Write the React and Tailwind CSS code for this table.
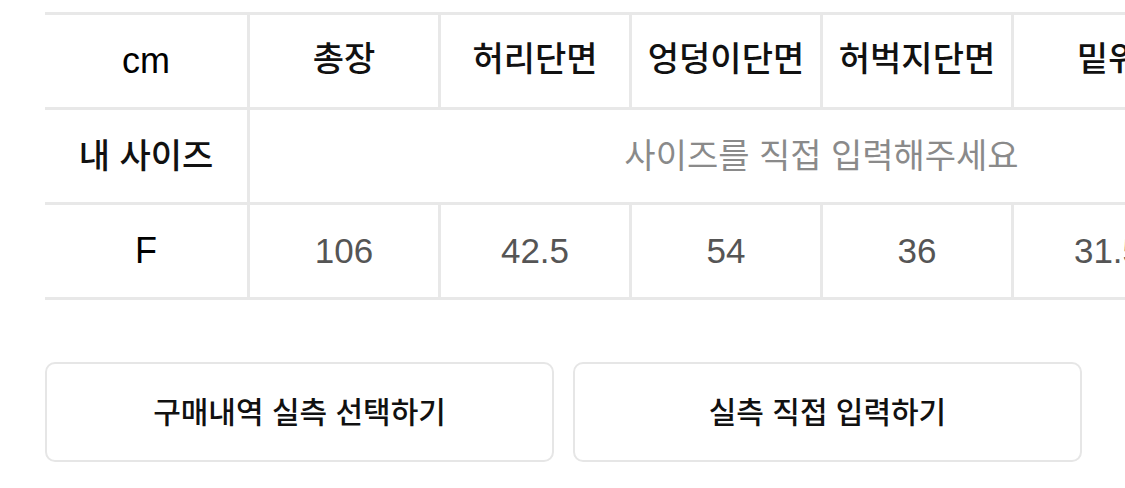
import React from 'react';

const font = { fontFamily: '"Liberation Sans", "Noto Sans CJK KR", sans-serif' };

const headers = ['총장', '허리단면', '엉덩이단면', '허벅지단면', '밑위'];
const values = ['106', '42.5', '54', '36', '31.5', '—'];

export default function App() {
    return (
        <div className="w-[1125px] h-[488px] overflow-hidden bg-white" style={font}>
            <div className="pl-[45px] pt-[12px]">
                <div className="grid grid-cols-[202px_repeat(6,191px)] w-max border-t-[3px] border-[#e8e8e8]">
                    {/* header row */}
                    <div className="h-[95px] flex items-center justify-center border-b-[3px] border-[#e8e8e8] text-[36px] text-black">cm</div>
                    {headers.map((h) => (
                        <div key={h} className="h-[95px] flex items-center justify-center border-b-[3px] border-l-[3px] border-[#e8e8e8] text-[34px] font-medium text-[#111] pb-[4px]">
                            {h}
                        </div>
                    ))}
                    <div className="h-[95px] flex items-center justify-center border-b-[3px] border-l-[3px] border-[#e8e8e8] text-[34px] font-medium text-[#111]">기장</div>

                    {/* my size row */}
                    <div className="h-[95px] flex items-center justify-center border-b-[3px] border-[#e8e8e8] text-[34px] font-medium text-[#111]">내 사이즈</div>
                    <div className="col-span-6 h-[95px] flex items-center justify-center border-b-[3px] border-l-[3px] border-[#e8e8e8] text-[34px] text-[#8a8a8a]">
                        사이즈를 직접 입력해주세요
                    </div>

                    {/* F row */}
                    <div className="h-[95px] flex items-center justify-center border-b-[3px] border-[#e8e8e8] text-[36px] font-medium text-black">F</div>
                    {values.map((v, i) => (
                        <div key={i} className="h-[95px] flex items-center justify-center border-b-[3px] border-l-[3px] border-[#e8e8e8] text-[35px] text-[#555]">
                            {v}
                        </div>
                    ))}
                </div>
            </div>

            <div className="flex gap-[19px] pl-[45px] mt-[62px]">
                <button className="w-[509px] h-[100px] rounded-[10px] border-2 border-[#e6e6e6] bg-white text-[30px] font-medium text-[#111] flex items-center justify-center">
                    구매내역 실측 선택하기
                </button>
                <button className="w-[509px] h-[100px] rounded-[10px] border-2 border-[#e6e6e6] bg-white text-[30px] font-medium text-[#111] flex items-center justify-center">
                    실측 직접 입력하기
                </button>
            </div>
        </div>
    );
}
